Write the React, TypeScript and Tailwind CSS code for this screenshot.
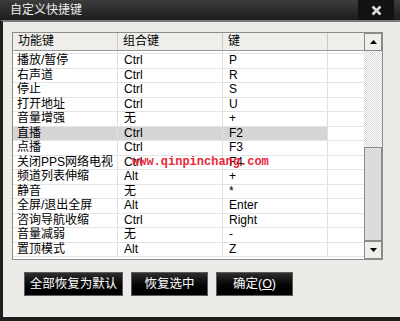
const rows = [
  ['播放/暂停', 'Ctrl', 'P'],
  ['右声道', 'Ctrl', 'R'],
  ['停止', 'Ctrl', 'S'],
  ['打开地址', 'Ctrl', 'U'],
  ['音量增强', '无', '+'],
  ['直播', 'Ctrl', 'F2'],
  ['点播', 'Ctrl', 'F3'],
  ['关闭PPS网络电视', 'Ctrl', 'F4'],
  ['频道列表伸缩', 'Alt', '+'],
  ['静音', '无', '*'],
  ['全屏/退出全屏', 'Alt', 'Enter'],
  ['咨询导航收缩', 'Ctrl', 'Right'],
  ['音量减弱', '无', '-'],
  ['置顶模式', 'Alt', 'Z'],
]

const font = { fontFamily: '"Liberation Sans", "Noto Sans CJK SC", sans-serif' }

function Arrow({ down }: { down?: boolean }) {
  return (
    <svg width="7" height="4" viewBox="0 0 7 4">
      <polygon points={down ? '0,0 7,0 3.5,4' : '0,4 7,4 3.5,0'} fill="#000" />
    </svg>
  )
}

export default function App() {
  return (
    <div className="w-[400px] h-[321px] flex flex-col bg-[#1e1e1e] text-black" style={font}>
      {/* Title bar */}
      <div className="h-[20px] flex items-center justify-between bg-gradient-to-b from-[#3c3c3c] to-[#1d1d1d]">
        <span className="pl-[10px] text-[12px] text-[#ececec] leading-none">自定义快捷键</span>
        <div className="h-[20px] w-[36px] mr-[6px] bg-[#121212] flex items-center justify-center">
          <svg width="11" height="11" viewBox="0 0 11 11">
            <path d="M1.5 1.5 L9.5 9.5 M9.5 1.5 L1.5 9.5" stroke="#d8d8d8" strokeWidth="2.6" />
          </svg>
        </div>
      </div>

      {/* Body */}
      <div className="flex-1 border-l-[3px] border-b-[4px] border-[#1e1e1e] border-t-2 border-t-[#7a7a7a] bg-[#ecebe8] flex flex-col pl-[9px] pt-[10px] relative">
        <div className="w-[371px] h-[228px] border border-[#8c8c8c] bg-white flex">
          <div className="flex-1 flex flex-col overflow-hidden">
            {/* Header */}
            <div className="h-[18px] flex bg-[#efeeeb] border-b border-[#9a9a9a] text-[12px] shrink-0">
              <div className="w-[105px] pl-[5px] border-r border-[#c8c8c8] leading-[17px]">功能键</div>
              <div className="w-[105px] pl-[5px] border-r border-[#c8c8c8] leading-[17px]">组合键</div>
              <div className="w-[105px] pl-[5px] border-r border-[#c8c8c8] leading-[17px]">键</div>
              <div className="flex-1" />
            </div>
            <div className="h-[3px] shrink-0 border-b border-[#e4e4e4] flex">
              <div className="w-[105px] border-r border-[#e0e0e0]" />
              <div className="w-[105px] border-r border-[#e0e0e0]" />
              <div className="w-[105px] border-r border-[#e0e0e0]" />
            </div>
            {rows.map(([a, b, c], i) => {
              const sel = a === '直播'
              return (
                <div key={i} className="h-[14.5px] shrink-0 flex border-b border-[#e4e4e4] text-[12px] leading-[13px]">
                  <div className={`w-[105px] pl-[4px] border-r border-[#e0e0e0] whitespace-nowrap ${sel ? 'bg-[#d6d6d6]' : ''}`}>{a}</div>
                  <div className={`w-[105px] pl-[6px] border-r border-[#e0e0e0] ${sel ? 'bg-[#d6d6d6]' : ''}`}>{b}</div>
                  <div className={`w-[105px] pl-[6px] border-r border-[#e0e0e0] ${sel ? 'bg-[#d6d6d6]' : ''}`}>{c}</div>
                  <div className="flex-1" />
                </div>
              )
            })}
          </div>
          {/* Scrollbar */}
          <div className="w-[18px] flex flex-col">
            <div className="h-[18px] border border-[#8a8a8a] bg-[#efeeeb] flex items-center justify-center">
              <Arrow />
            </div>
            <div className="h-[96px] bg-[repeating-conic-gradient(#d8d8d8_0_25%,#ffffff_0_50%)] bg-[length:2px_2px]" />
            <div className="flex-1 border border-[#8a8a8a] bg-[#dcdcdc]" />
            <div className="h-[18px] border border-[#8a8a8a] bg-[#efeeeb] flex items-center justify-center">
              <Arrow down />
            </div>
          </div>
        </div>

        {/* Watermark */}
        <div
          className="absolute left-[129px] top-[134px] text-[12px] font-bold text-[#e8283a] leading-none"
          style={{ fontFamily: '"Liberation Mono", monospace' }}
        >
          www.qinpinchang.com
        </div>

        {/* Buttons */}
        <div className="flex gap-[8px] ml-[12px] mt-[12px]">
          {['全部恢复为默认', '恢复选中'].map((t, i) => (
            <button
              key={t}
              className={`h-[24px] ${i === 0 ? 'w-[99px]' : 'w-[77px]'} border border-[#5c5c5c] bg-gradient-to-b from-[#2e2e2e] via-[#080808] to-[#000] text-white text-[12.5px] leading-none`}
            >
              {t}
            </button>
          ))}
          <button className="h-[24px] w-[77px] border border-[#5c5c5c] bg-gradient-to-b from-[#2e2e2e] via-[#080808] to-[#000] text-white text-[12.5px] leading-none">
            确定(<span className="underline">O</span>)
          </button>
        </div>
      </div>
    </div>
  )
}
